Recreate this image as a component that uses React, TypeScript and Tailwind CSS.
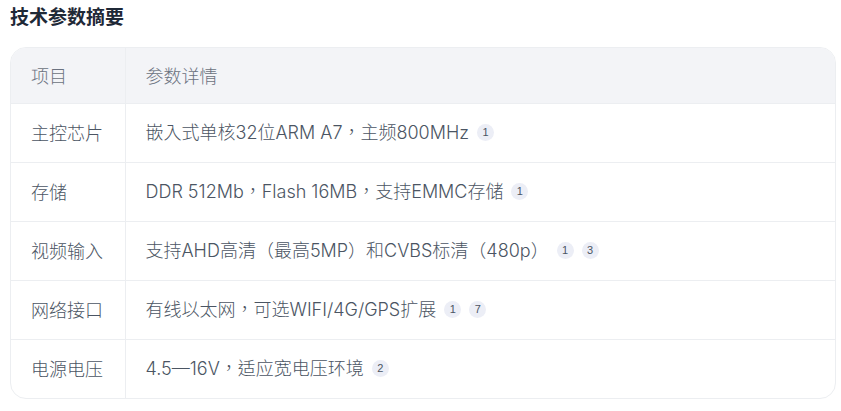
const ROWS: { label: string; detail: string; refs: number[] }[] = [
  { label: '主控芯片', detail: '嵌入式单核32位ARM A7，主频800MHz', refs: [1] },
  { label: '存储', detail: 'DDR 512Mb，Flash 16MB，支持EMMC存储', refs: [1] },
  { label: '视频输入', detail: '支持AHD高清（最高5MP）和CVBS标清（480p）', refs: [1, 3] },
  { label: '网络接口', detail: '有线以太网，可选WIFI/4G/GPS扩展', refs: [1, 7] },
  { label: '电源电压', detail: '4.5—16V，适应宽电压环境', refs: [2] },
]

function RefBadge({ n }: { n: number }) {
  return (
    <span className="ml-2 inline-flex h-[17px] w-[17px] items-center justify-center rounded-full bg-[#eceef6] font-['Liberation_Sans',sans-serif] text-[11px] font-normal leading-none text-[#4b5563]">
      {n}
    </span>
  )
}

export default function App() {
  return (
    <div className="min-h-screen bg-white px-[10px] pt-[3px] font-['Noto_Sans_CJK_SC',sans-serif]">
      <h3 className="text-[19px] font-bold leading-[26px] text-[#1f2937]">技术参数摘要</h3>

      <div className="mt-[18px] w-[826px] overflow-hidden rounded-2xl border border-[#eceef1]">
        <table className="w-full border-collapse text-[18px] font-light">
          <thead className="bg-[#f3f4f7] text-[#6b7280]">
            <tr className="h-[55px]">
              <th className="w-[114px] border-r border-[#eceef1] pl-5 text-left font-light">项目</th>
              <th className="pl-5 text-left font-light">参数详情</th>
            </tr>
          </thead>
          <tbody className="text-[#4b5563]">
            {ROWS.map(row => (
              <tr key={row.label} className="h-[59px] border-t border-[#eceef1]">
                <td className="border-r border-[#eceef1] pl-5">{row.label}</td>
                <td className="pl-5 font-['Inter','Noto_Sans_CJK_TC',sans-serif]">
                  <span className="inline-flex items-center">
                    {row.detail}
                    {row.refs.map(r => <RefBadge key={r} n={r} />)}
                  </span>
                </td>
              </tr>
            ))}
          </tbody>
        </table>
      </div>
    </div>
  )
}
